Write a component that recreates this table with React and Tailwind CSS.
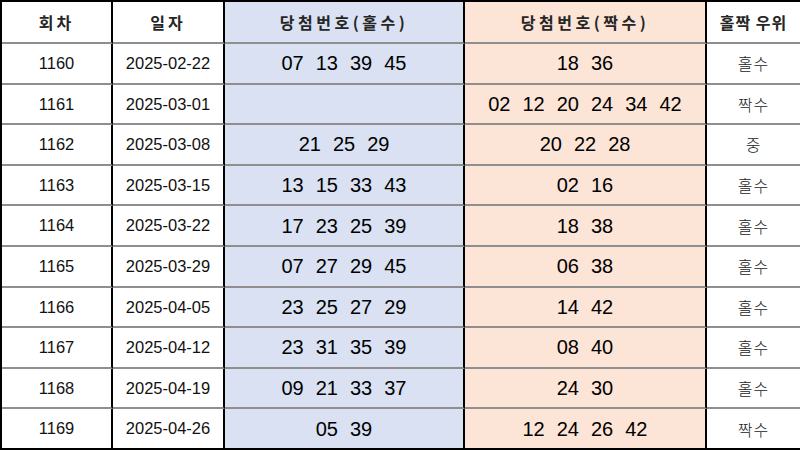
import React from "react";

const rows = [
  ["1160", "2025-02-22", ["07", "13", "39", "45"], ["18", "36"], "홀수"],
  ["1161", "2025-03-01", [], ["02", "12", "20", "24", "34", "42"], "짝수"],
  ["1162", "2025-03-08", ["21", "25", "29"], ["20", "22", "28"], "중"],
  ["1163", "2025-03-15", ["13", "15", "33", "43"], ["02", "16"], "홀수"],
  ["1164", "2025-03-22", ["17", "23", "25", "39"], ["18", "38"], "홀수"],
  ["1165", "2025-03-29", ["07", "27", "29", "45"], ["06", "38"], "홀수"],
  ["1166", "2025-04-05", ["23", "25", "27", "29"], ["14", "42"], "홀수"],
  ["1167", "2025-04-12", ["23", "31", "35", "39"], ["08", "40"], "홀수"],
  ["1168", "2025-04-19", ["09", "21", "33", "37"], ["24", "30"], "홀수"],
  ["1169", "2025-04-26", ["05", "39"], ["12", "24", "26", "42"], "짝수"],
];

const KO = "font-['Noto_Sans_CJK_KR','Noto_Sans',sans-serif]";
const AR = "font-['Liberation_Sans',Arial,sans-serif]";

function Cell({ children, className = "" }) {
  return (
    <div
      className={
        "flex items-center justify-center border-r-2 border-b-2 border-r-black border-b-[#8f8f8f] " +
        className
      }
    >
      {children}
    </div>
  );
}

function Nums({ list }) {
  return (
    <div className="flex gap-[12px] text-[20px] text-black leading-none font-['Liberation_Sans',Arial,sans-serif]">
      {list.map((n, i) => (
        <span key={i}>{n}</span>
      ))}
    </div>
  );
}

const HEAD = "text-[16px] font-bold text-[#262626] " + KO;

export default function App() {
  return (
    <div className="w-[800px] h-[450px] bg-white overflow-hidden">
      <div className="w-[800px] h-[450px] grid grid-cols-[111px_112px_240px_242px_95px] grid-rows-[42px_repeat(10,1fr)] border-l-2 border-t-2 border-black">
        <Cell className={"bg-white tracking-[3px] " + HEAD}>회차</Cell>
        <Cell className={"bg-white tracking-[3px] " + HEAD}>일자</Cell>
        <Cell className={"bg-[#d9e1f2] tracking-[3.5px] " + HEAD}>당첨번호(홀수)</Cell>
        <Cell className={"bg-[#fce4d6] tracking-[3.5px] " + HEAD}>당첨번호(짝수)</Cell>
        <Cell className={"bg-white tracking-[1px] whitespace-nowrap " + HEAD}>홀짝 우위</Cell>
        {rows.map(([no, date, odd, even, res], i) => {
          const last = i === rows.length - 1;
          const b = last ? " border-b-black" : "";
          return (
            <React.Fragment key={no}>
              <Cell className={"bg-white text-[16.5px] text-[#111] " + AR + b}>{no}</Cell>
              <Cell className={"bg-white text-[16.5px] text-[#111] " + AR + b}>{date}</Cell>
              <Cell className={"bg-[#d9e1f2]" + b}>
                <Nums list={odd} />
              </Cell>
              <Cell className={"bg-[#fce4d6]" + b}>
                <Nums list={even} />
              </Cell>
              <Cell className={"bg-white text-[16px] font-light text-[#222] tracking-[1px] " + KO + b}>
                {res}
              </Cell>
            </React.Fragment>
          );
        })}
      </div>
    </div>
  );
}
